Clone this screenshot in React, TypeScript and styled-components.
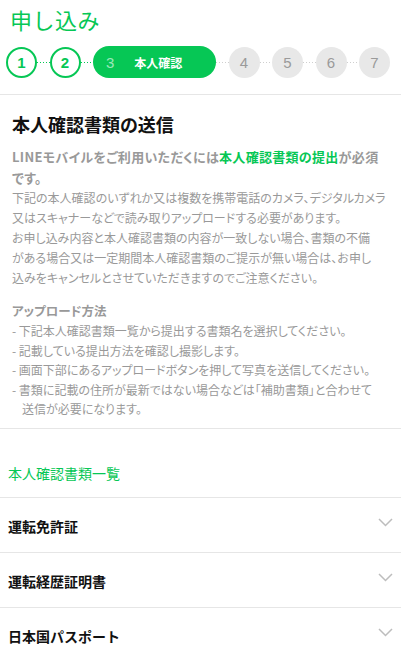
import React from "react";
import styled, { createGlobalStyle } from "styled-components";

const GREEN = "#06c755";

const GlobalStyle = createGlobalStyle`
  html, body { margin: 0; padding: 0; background: #fff; }
  body {
    font-family: "Noto Sans CJK JP", "Noto Sans", sans-serif;
    -webkit-font-smoothing: antialiased;
  }
  * { box-sizing: border-box; }
`;

const Page = styled.div`
  width: 401px;
  background: #fff;
`;

const Header = styled.header`
  padding: 5px 0 0;
  border-bottom: 1px solid #e6e6e6;
`;

const Title = styled.h1`
  margin: 0 0 0 10px;
  font-size: 22px;
  line-height: 28px;
  font-weight: 400;
  color: ${GREEN};
  letter-spacing: 0.5px;
`;

const Stepper = styled.div`
  display: flex;
  align-items: center;
  margin-top: 13px;
  padding: 0 11px 16px 6px;
`;

const Circle = styled.div<{ $state: "done" | "todo" }>`
  flex: none;
  width: 31px;
  height: 31px;
  border-radius: 50%;
  display: flex;
  align-items: center;
  justify-content: center;
  font-family: "Liberation Sans", Arial, sans-serif;
  font-size: 15px;
  font-weight: ${(p) => (p.$state === "done" ? 700 : 400)};
  color: ${(p) => (p.$state === "done" ? GREEN : "#9a9a9a")};
  background: ${(p) => (p.$state === "done" ? "#fff" : "#e8e8e8")};
  border: ${(p) => (p.$state === "done" ? `2px solid ${GREEN}` : "none")};
`;

const Connector = styled.div<{ $active: boolean }>`
  flex: 1;
  height: 1px;
  background-image: repeating-linear-gradient(
    to right,
    ${(p) => (p.$active ? GREEN : "#cfcfcf")} 0 1px,
    transparent 1px 3px
  );
`;

const Pill = styled.div`
  flex: none;
  width: 123px;
  height: 32px;
  border-radius: 16px;
  background: ${GREEN};
  display: flex;
  align-items: center;
  padding-left: 13px;
  gap: 20px;
`;

const PillNum = styled.span`
  font-family: "Liberation Sans", Arial, sans-serif;
  font-size: 15px;
  color: rgba(255, 255, 255, 0.6);
`;

const PillLabel = styled.span`
  font-size: 12px;
  font-weight: 700;
  color: #fff;
`;

const Intro = styled.section`
  padding: 17px 12px 9px;
  border-bottom: 1px solid #e6e6e6;
  font-feature-settings: "palt";
`;

const Heading = styled.h2`
  margin: 0;
  font-size: 18px;
  line-height: 24px;
  font-weight: 700;
  color: #111;
`;

const Lead = styled.p`
  margin: 10px 0 0;
  font-size: 13px;
  line-height: 21px;
  font-weight: 700;
  color: #999;
  letter-spacing: 0.3px;
`;

const Em = styled.span`
  color: ${GREEN};
`;

const Body = styled.p`
  margin: 0;
  font-size: 12px;
  line-height: 20px;
  color: #999;
  white-space: nowrap;
`;

const SubHeading = styled.h3`
  margin: 13px 0 0;
  font-size: 12.5px;
  line-height: 20px;
  font-weight: 700;
  color: #999;
`;

const Steps = styled.ul`
  list-style: none;
  margin: 0;
  padding: 0;
`;

const StepItem = styled.li`
  font-size: 12px;
  line-height: 19.5px;
  color: #999;
  padding-left: 10px;
  text-indent: -10px;
`;

const ListHeader = styled.div`
  padding: 34px 8px 14px;
  font-size: 14px;
  line-height: 20px;
  color: ${GREEN};
  border-bottom: 1px solid #e6e6e6;
`;

const Row = styled.div`
  height: 55px;
  display: flex;
  align-items: center;
  justify-content: space-between;
  padding: 3px 8px 0 8px;
  border-bottom: 1px solid #e6e6e6;
`;

const RowLabel = styled.span`
  font-size: 14px;
  font-weight: 700;
  color: #111;
`;

const Chevron = styled.svg`
  margin-top: -7px;
`;

const ChevronIcon = () => (
  <Chevron width="15" height="9" viewBox="0 0 15 9">
    <path d="M1 1 L7.5 7.5 L14 1" fill="none" stroke="#bdbdbd" strokeWidth="1.5" />
  </Chevron>
);

const docs = ["運転免許証", "運転経歴証明書", "日本国パスポート"];

export default function App() {
  return (
    <Page>
      <GlobalStyle />
      <Header>
        <Title>申し込み</Title>
        <Stepper>
          <Circle $state="done">1</Circle>
          <Connector $active />
          <Circle $state="done">2</Circle>
          <Connector $active />
          <Pill>
            <PillNum>3</PillNum>
            <PillLabel>本人確認</PillLabel>
          </Pill>
          <Connector $active={false} />
          <Circle $state="todo">4</Circle>
          <Connector $active={false} />
          <Circle $state="todo">5</Circle>
          <Connector $active={false} />
          <Circle $state="todo">6</Circle>
          <Connector $active={false} />
          <Circle $state="todo">7</Circle>
        </Stepper>
      </Header>
      <Intro>
        <Heading>本人確認書類の送信</Heading>
        <Lead>
          LINEモバイルをご利用いただくには<Em>本人確認書類の提出</Em>が必須
          <br />
          です。
        </Lead>
        <Body>
          下記の本人確認のいずれか又は複数を携帯電話のカメラ、デジタルカメラ
          <br />
          又はスキャナーなどで読み取りアップロードする必要があります。
          <br />
          お申し込み内容と本人確認書類の内容が一致しない場合、書類の不備
          <br />
          がある場合又は一定期間本人確認書類のご提示が無い場合は、お申し
          <br />
          込みをキャンセルとさせていただきますのでご注意ください。
        </Body>
        <SubHeading>アップロード方法</SubHeading>
        <Steps>
          <StepItem>- 下記本人確認書類一覧から提出する書類名を選択してください。</StepItem>
          <StepItem>- 記載している提出方法を確認し撮影します。</StepItem>
          <StepItem>- 画面下部にあるアップロードボタンを押して写真を送信してください。</StepItem>
          <StepItem>
            - 書類に記載の住所が最新ではない場合などは「補助書類」と合わせて
            <br />
            送信が必要になります。
          </StepItem>
        </Steps>
      </Intro>
      <ListHeader>本人確認書類一覧</ListHeader>
      {docs.map((d) => (
        <Row key={d}>
          <RowLabel>{d}</RowLabel>
          <ChevronIcon />
        </Row>
      ))}
    </Page>
  );
}
